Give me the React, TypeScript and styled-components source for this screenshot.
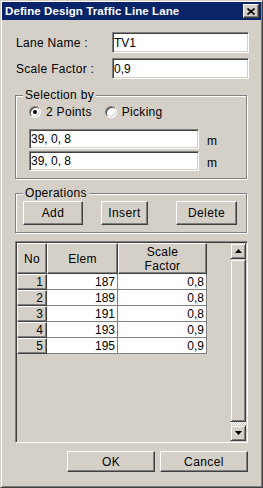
import React from "react";
import styled, { createGlobalStyle } from "styled-components";

const GlobalStyle = createGlobalStyle`
  html, body {
    margin: 0;
    padding: 0;
    background: #d4d0c8;
  }
  * {
    box-sizing: border-box;
  }
`;

const FACE = "#d4d0c8";
const SHADOW = "#808080";
const DARK = "#404040";

const Window = styled.div`
  width: 263px;
  height: 488px;
  display: flex;
  flex-direction: column;
  background: ${FACE};
  border: 1px solid;
  border-color: ${FACE} ${DARK} ${DARK} ${FACE};
  box-shadow: inset 1px 1px 0 #fff, inset -1px -1px 0 ${SHADOW};
  padding: 1px;
  font-family: "Liberation Sans", Arial, sans-serif;
  font-size: 12px;
  color: #000;
`;

const TitleBar = styled.div`
  height: 18px;
  display: flex;
  align-items: center;
  justify-content: space-between;
  padding: 0 2px 0 3px;
  background: #0a246a;
`;

const TitleText = styled.span`
  color: #fff;
  font-weight: bold;
  font-size: 11.5px;
  letter-spacing: 0.1px;
`;

const CloseButton = styled.div`
  width: 16px;
  height: 14px;
  display: flex;
  align-items: center;
  justify-content: center;
  background: ${FACE};
  border: 1px solid;
  border-color: #fff ${DARK} ${DARK} #fff;
  box-shadow: inset -1px -1px 0 ${SHADOW};
`;

const Body = styled.div`
  display: flex;
  flex-direction: column;
  padding: 12px 12px 0 13px;
`;

const FieldRow = styled.div<{ $gap?: number }>`
  display: flex;
  align-items: center;
  justify-content: space-between;
  height: 21px;
  margin-top: ${(p) => p.$gap ?? 0}px;
`;

const Label = styled.span`
  letter-spacing: 0.3px;
  padding-left: 1px;
`;

const TextBox = styled.input<{ $w: number; $h?: number }>`
  width: ${(p) => p.$w}px;
  height: ${(p) => p.$h ?? 21}px;
  margin: 0;
  padding: 0 0 0 1px;
  background: #fff;
  border: 1px solid;
  border-color: ${SHADOW} #fff #fff ${SHADOW};
  box-shadow: inset 1px 1px 0 ${DARK}, inset -1px -1px 0 ${FACE};
  font-family: "Liberation Sans", Arial, sans-serif;
  font-size: 12px;
  color: #000;
  outline: none;
`;

const Group = styled.fieldset<{ $gap: number }>`
  width: 232px;
  margin: ${(p) => p.$gap}px 0 0 0;
  padding: 0;
  min-inline-size: 0;
  border: 1px solid ${SHADOW};
  box-shadow: inset 1px 1px 0 #fff, 1px 1px 0 #fff;
`;

const Caption = styled.legend`
  margin-left: 7px;
  padding: 0 2px;
  line-height: 14px;
  background: ${FACE};
  letter-spacing: 0.3px;
`;

const SelectionBody = styled.div`
  display: flex;
  flex-direction: column;
  padding: 3px 0 7px 13px;
`;

const RadioRow = styled.div`
  display: flex;
  align-items: center;
  height: 14px;
  gap: 13px;
`;

const RadioItem = styled.label`
  display: flex;
  align-items: center;
  gap: 5px;
  letter-spacing: 0.3px;
`;

const RadioDot = styled.span<{ $on?: boolean }>`
  position: relative;
  width: 12px;
  height: 12px;
  border-radius: 50%;
  background: #fff;
  border: 1px solid;
  border-color: ${SHADOW} #fff #fff ${SHADOW};
  box-shadow: inset 1px 1px 0 ${DARK}, inset -1px -1px 0 ${FACE};
  &::after {
    content: "";
    display: ${(p) => (p.$on ? "block" : "none")};
    position: absolute;
    left: 3px;
    top: 3px;
    width: 4px;
    height: 4px;
    border-radius: 50%;
    background: #000;
  }
`;

const PointRow = styled.div<{ $gap: number }>`
  display: flex;
  align-items: center;
  gap: 8px;
  margin-top: ${(p) => p.$gap}px;
`;

const Unit = styled.span`
  padding-top: 3px;
`;

const OpsBody = styled.div`
  display: flex;
  align-items: center;
  padding: 1px 9px 7px 7px;
`;

const Button = styled.button<{ $w: number; $h: number; $ml?: string }>`
  width: ${(p) => p.$w}px;
  height: ${(p) => p.$h}px;
  margin: 0 0 0 ${(p) => p.$ml ?? "0"};
  padding: 0;
  background: ${FACE};
  border: 1px solid;
  border-color: #fff ${DARK} ${DARK} #fff;
  box-shadow: inset -1px -1px 0 ${SHADOW};
  font-family: "Liberation Sans", Arial, sans-serif;
  font-size: 12px;
  letter-spacing: 0.4px;
  color: #000;
`;

const GridBox = styled.div`
  width: 233px;
  height: 202px;
  margin-top: 8px;
  display: flex;
  justify-content: space-between;
  border: 1px solid;
  border-color: ${SHADOW} #fff #fff ${SHADOW};
  box-shadow: inset 1px 1px 0 ${DARK}, inset -1px -1px 0 ${FACE};
  padding: 1px;
`;

const Table = styled.div`
  display: grid;
  grid-template-columns: 30px 71px 89px;
  grid-template-rows: 31px;
  grid-auto-rows: 16px;
  align-content: start;
`;

const HeadCell = styled.div`
  display: flex;
  align-items: center;
  justify-content: center;
  text-align: center;
  line-height: 14px;
  background: ${FACE};
  border: 1px solid;
  border-color: #fff ${DARK} ${DARK} #fff;
  box-shadow: inset -1px -1px 0 ${SHADOW};
  letter-spacing: 0.3px;
`;

const RowHead = styled.div`
  display: flex;
  align-items: center;
  justify-content: flex-end;
  padding-right: 3px;
  background: ${FACE};
  border: 1px solid;
  border-color: #fff ${DARK} ${DARK} #fff;
  box-shadow: inset -1px -1px 0 ${SHADOW};
`;

const DataCell = styled.div`
  display: flex;
  align-items: center;
  justify-content: flex-end;
  padding-right: 2px;
  background: #fff;
  border-right: 1px solid ${SHADOW};
  border-bottom: 1px solid ${SHADOW};
`;

const ScrollBar = styled.div`
  width: 16px;
  display: flex;
  flex-direction: column;
  background-color: #fff;
  background-image: conic-gradient(${FACE} 25%, #fff 0 50%, ${FACE} 0 75%, #fff 0);
  background-size: 2px 2px;
`;

const ScrollButton = styled.div`
  width: 16px;
  height: 16px;
  display: flex;
  align-items: center;
  justify-content: center;
  background: ${FACE};
  border: 1px solid;
  border-color: ${FACE} ${DARK} ${DARK} ${FACE};
  box-shadow: inset 1px 1px 0 #fff, inset -1px -1px 0 ${SHADOW};
`;

const Thumb = styled.div`
  flex: 1;
  margin-bottom: 3px;
  background: ${FACE};
  border: 1px solid;
  border-color: ${FACE} ${DARK} ${DARK} ${FACE};
  box-shadow: inset 1px 1px 0 #fff, inset -1px -1px 0 ${SHADOW};
`;

const Footer = styled.div`
  display: flex;
  justify-content: flex-end;
  gap: 5px;
  margin-top: 8px;
  padding-right: 1px;
`;

const rows = [
  { no: 1, elem: 187, factor: "0,8" },
  { no: 2, elem: 189, factor: "0,8" },
  { no: 3, elem: 191, factor: "0,8" },
  { no: 4, elem: 193, factor: "0,9" },
  { no: 5, elem: 195, factor: "0,9" },
];

const Arrow: React.FC<{ down?: boolean }> = ({ down }) => (
  <svg width="7" height="4" viewBox="0 0 7 4">
    <path d={down ? "M0 0H7L3.5 4Z" : "M3.5 0L7 4H0Z"} fill="#000" />
  </svg>
);

const App: React.FC = () => {
  return (
    <>
      <GlobalStyle />
      <Window>
        <TitleBar>
          <TitleText>Define Design Traffic Line Lane</TitleText>
          <CloseButton>
            <svg width="8" height="7" viewBox="0 0 8 7">
              <path d="M0.5 0.5L7.5 6.5M7.5 0.5L0.5 6.5" stroke="#000" strokeWidth="1.6" />
            </svg>
          </CloseButton>
        </TitleBar>
        <Body>
          <FieldRow>
            <Label>Lane Name :</Label>
            <TextBox $w={137} defaultValue="TV1" />
          </FieldRow>
          <FieldRow $gap={5}>
            <Label>Scale Factor :</Label>
            <TextBox $w={137} defaultValue="0,9" />
          </FieldRow>

          <Group $gap={9}>
            <Caption>Selection by</Caption>
            <SelectionBody>
              <RadioRow>
                <RadioItem>
                  <RadioDot $on />
                  2 Points
                </RadioItem>
                <RadioItem>
                  <RadioDot />
                  Picking
                </RadioItem>
              </RadioRow>
              <PointRow $gap={10}>
                <TextBox $w={170} $h={20} defaultValue="39, 0, 8" />
                <Unit>m</Unit>
              </PointRow>
              <PointRow $gap={2}>
                <TextBox $w={170} $h={20} defaultValue="39, 0, 8" />
                <Unit>m</Unit>
              </PointRow>
            </SelectionBody>
          </Group>

          <Group $gap={7}>
            <Caption>Operations</Caption>
            <OpsBody>
              <Button $w={60} $h={24}>Add</Button>
              <Button $w={47} $h={24} $ml="18px">Insert</Button>
              <Button $w={61} $h={24} $ml="auto">Delete</Button>
            </OpsBody>
          </Group>

          <GridBox>
            <Table>
              <HeadCell>No</HeadCell>
              <HeadCell>Elem</HeadCell>
              <HeadCell>
                Scale
                <br />
                Factor
              </HeadCell>
              {rows.map((r) => (
                <React.Fragment key={r.no}>
                  <RowHead>{r.no}</RowHead>
                  <DataCell>{r.elem}</DataCell>
                  <DataCell>{r.factor}</DataCell>
                </React.Fragment>
              ))}
            </Table>
            <ScrollBar>
              <ScrollButton>
                <Arrow />
              </ScrollButton>
              <Thumb />
              <ScrollButton>
                <Arrow down />
              </ScrollButton>
            </ScrollBar>
          </GridBox>

          <Footer>
            <Button $w={88} $h={21}>OK</Button>
            <Button $w={88} $h={21}>Cancel</Button>
          </Footer>
        </Body>
      </Window>
    </>
  );
};

export default App;
